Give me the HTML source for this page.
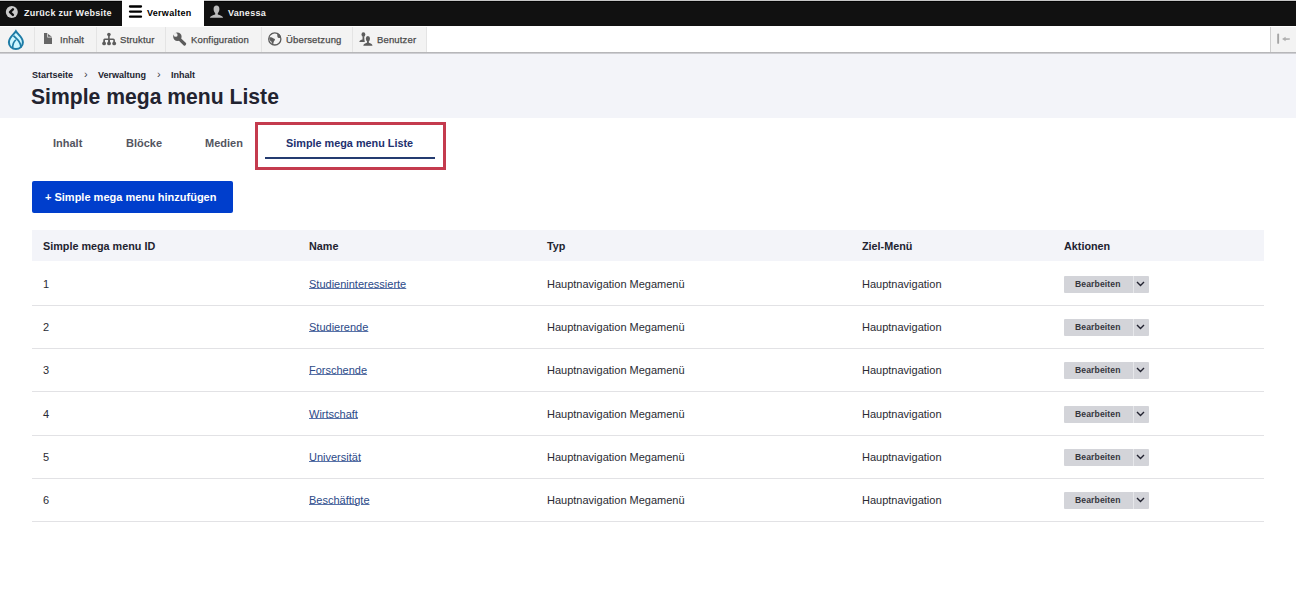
<!DOCTYPE html>
<html><head><meta charset="utf-8">
<style>
*{box-sizing:border-box;margin:0;padding:0}
html,body{width:1296px;height:592px;overflow:hidden;background:#fff;font-family:"Liberation Sans",sans-serif;color:#222330}
.abs{position:absolute;white-space:nowrap}
#topline{position:absolute;left:0;top:0;width:1296px;height:1px;background:#c6c6c6}
#bar{position:absolute;left:0;top:1px;width:1296px;height:25px;background:#111;border-top:1px solid #040404}
.bt{position:absolute;top:1px;height:25px;line-height:25px;font-size:9px;font-weight:700;letter-spacing:.28px;color:#f0f0f0}
#tray{position:absolute;left:0;top:26px;width:1296px;height:26px;background:#fff;border-top:1px solid #fff}
#trayshadow{position:absolute;left:0;top:52px;width:1296px;height:2px;background:linear-gradient(#ababad,#d8d9de)}
.ti{position:absolute;top:27px;height:25px;background:#f3f3f3;border-right:1px solid #e4e4e4}
.tt{position:absolute;top:27px;height:25px;line-height:25px;font-size:9.5px;color:#4a4a4a;letter-spacing:.15px;-webkit-text-stroke:.25px #4a4a4a}
#header{position:absolute;left:0;top:54px;width:1296px;height:64px;background:#f3f4f9}
.crumb{position:absolute;top:69px;font-size:9px;font-weight:700;color:#222330;line-height:12px}
#title{position:absolute;left:31px;top:84px;font-size:21.15px;font-weight:700;line-height:26px;color:#222330}
.tab{position:absolute;top:137px;font-size:11px;font-weight:700;color:#545560;line-height:13px}
#redbox{position:absolute;left:255px;top:122px;width:191px;height:48px;border:3px solid #c43b4e}
#uline{position:absolute;left:265px;top:157px;width:170px;height:2px;background:#243b70}
#btn{position:absolute;left:32px;top:181px;width:201px;height:32px;background:#003ecc;border-radius:2px;color:#fff;font-size:11px;font-weight:700;line-height:32px;padding-left:13px}
#thead{position:absolute;left:32px;top:230px;width:1232px;height:31px;background:#f3f4f9}
.th{position:absolute;top:240px;font-size:10.8px;font-weight:700;color:#222330;line-height:13px}
.td{position:absolute;font-size:11px;color:#2a2b33;line-height:13px}
.lnk{color:#2c4a88;text-decoration:underline;text-decoration-color:#5872a8;text-underline-offset:0px}
.sep{position:absolute;left:32px;width:1232px;height:1px;background:#e2e2e5}
.ab{position:absolute;left:1064px;width:85px;height:17px;background:#d3d4d9;border-radius:1px}
.ab .l{position:absolute;left:11px;top:0;line-height:17px;font-size:8.6px;font-weight:700;color:#35363d;letter-spacing:.12px}
.ab .s{position:absolute;left:69px;top:0;width:1px;height:17px;background:#e6e7ea}
.ab svg{position:absolute;left:72px;top:5px}
</style></head><body>
<div id="topline"></div>
<div id="bar"></div>
<!-- back icon -->
<svg class="abs" style="left:5px;top:5px" width="14" height="14" viewBox="0 0 14 14"><circle cx="6.8" cy="7" r="6" fill="#cbcbcb"/><path d="M7.9 4.3 L5 7.1 L7.9 9.9" stroke="#0f0f0f" stroke-width="2.4" fill="none" stroke-linecap="round" stroke-linejoin="round"/></svg>
<div class="bt" style="left:24px">Zurück zur Website</div>
<div class="abs" style="left:122px;top:0;width:82px;height:26px;background:#fff"></div>
<svg class="abs" style="left:128px;top:5px" width="15" height="14" viewBox="0 0 15 14"><path d="M2 1.5 H13 M2 6.6 H13 M2 11.7 H13" stroke="#000" stroke-width="2.3" stroke-linecap="round"/></svg>
<div class="bt" style="left:147px;color:#000">Verwalten</div>
<svg class="abs" style="left:209px;top:5px" width="15" height="14" viewBox="0 0 15 14"><path d="M7.5 0.5 C5.6 0.5 4.6 2 4.6 4 C4.6 6 5.5 7.6 6.2 8.2 L6.2 9.4 C4 10 1.5 10.8 0.8 12.8 L14.2 12.8 C13.5 10.8 11 10 8.8 9.4 L8.8 8.2 C9.5 7.6 10.4 6 10.4 4 C10.4 2 9.4 0.5 7.5 0.5Z" fill="#bcbcbc"/></svg>
<div class="bt" style="left:228px">Vanessa</div>

<div id="tray"></div>
<div class="ti" style="left:0;width:35px"></div>
<div class="ti" style="left:35px;width:62px"></div>
<div class="ti" style="left:97px;width:69px"></div>
<div class="ti" style="left:166px;width:96px"></div>
<div class="ti" style="left:262px;width:91px"></div>
<div class="ti" style="left:353px;width:74px"></div>
<div class="ti" style="left:1270px;width:26px;border-left:1px solid #cfcfcf;border-right:none"></div>
<div id="trayshadow"></div>
<!-- drupal logo -->
<svg class="abs" style="left:4px;top:27px" width="24" height="26" viewBox="0 0 24 26"><path d="M11.9 4.3 C13.4 7 18.9 10.2 18.9 15.2 C18.9 19.2 15.8 22 11.9 22 C8 22 4.9 19.2 4.9 15.2 C4.9 10.2 10.4 7 11.9 4.3Z" fill="#cdf6ff" stroke="#1e7ca6" stroke-width="2"/><path d="M9.6 8.8 C11.8 11.6 16.8 13.6 17 20.6" fill="none" stroke="#1e7ca6" stroke-width="1.8"/><path d="M11.9 12.9 C10 14.4 8.6 17 8.7 21" fill="none" stroke="#1e7ca6" stroke-width="1.7"/></svg>
<!-- doc icon -->
<svg class="abs" style="left:44px;top:33px" width="8" height="11" viewBox="0 0 8 11"><path d="M0 0 H3.3 V4.4 H8 V11 H0Z M4 1.1 L7.9 3.8 L4 3.8Z" fill="#666"/></svg>
<div class="tt" style="left:60px">Inhalt</div>
<!-- struktur -->
<svg class="abs" style="left:100px;top:30px" width="20" height="18" viewBox="0 0 20 18"><g fill="#5c5c5c"><circle cx="8.9" cy="4.6" r="1.8"/><rect x="8.1" y="5" width="1.6" height="4.4"/><path d="M4.6 8.4 H13.2 Q14.9 8.4 14.9 10.1 V13 H13.3 V10 H10 V13 H8.1 V10 H5 V13 H3.3 V10.1 Q3.3 8.4 4.6 8.4Z"/><circle cx="4.1" cy="13.4" r="1.9"/><circle cx="9" cy="13.4" r="1.9"/><circle cx="14.2" cy="13.4" r="1.9"/></g></svg>
<div class="tt" style="left:120px">Struktur</div>
<!-- wrench -->
<svg class="abs" style="left:170px;top:29px" width="20" height="19" viewBox="0 0 20 19"><g fill="#5c5c5c"><path d="M9 9.6 L14.6 15" stroke="#5c5c5c" stroke-width="3.2" stroke-linecap="round"/><circle cx="7.4" cy="7.8" r="4.2"/></g><circle cx="5.7" cy="5.9" r="1.9" fill="#f3f3f3"/><path d="M5.8 3.2 L3.2 5.8 L1 3.6 L3.6 1Z" fill="#f3f3f3"/></svg>
<div class="tt" style="left:191px">Konfiguration</div>
<!-- globe -->
<svg class="abs" style="left:265px;top:29px" width="20" height="19" viewBox="0 0 20 19"><circle cx="9.8" cy="9.9" r="6.1" fill="none" stroke="#5c5c5c" stroke-width="1.3"/><g fill="#5c5c5c"><path d="M12 3.8 C13.8 4.4 15.6 6 16.1 8.6 C15 9.4 13.6 9.2 12.6 8.2 C12 7 12.6 5.6 12 3.8Z"/><path d="M4.2 8.4 C6 8.2 7.4 8.8 8.6 9.4 C9.8 9.6 10.4 10.4 9.8 11.2 C8.8 12 8.2 13.2 8.4 15.8 C7.2 15.6 6.6 14 6.4 12.6 C5.4 12 4.4 11 4.2 8.4Z"/><path d="M5.2 5.6 C6.2 4.4 7.4 3.9 8.2 4 C7.4 5 6.4 5.8 5.2 5.6Z"/></g></svg>
<div class="tt" style="left:286px">Übersetzung</div>
<!-- users -->
<svg class="abs" style="left:356px;top:29px" width="20" height="19" viewBox="0 0 20 19"><g fill="#5c5c5c"><ellipse cx="7.4" cy="5.6" rx="1.9" ry="2.4"/><path d="M3.3 13 C3.5 11.4 5 10.8 6.5 10.4 L6.6 7.6 L8.2 7.6 L8.4 10.4 L8.8 13Z"/><ellipse cx="11.9" cy="9.7" rx="2.1" ry="2.6"/><path d="M7.3 16.8 C7.5 15 9.3 14.2 10.9 13.8 L11 11.6 L12.8 11.6 L12.9 13.8 C14.5 14.2 16.3 15 16.5 16.8Z"/></g></svg>
<div class="tt" style="left:377px">Benutzer</div>
<!-- toggle -->
<svg class="abs" style="left:1276px;top:33px" width="16" height="12" viewBox="0 0 16 12"><rect x="1.2" y="0.6" width="1.9" height="10.2" rx="0.9" fill="#a4a4a4"/><path d="M6 6 L9.6 3.8 L9.6 5.2 L13.8 5.3 L13.8 6.8 L9.6 6.9 L9.6 8.2Z" fill="#b0b0b0"/></svg>

<div id="header"></div>
<div class="crumb" style="left:32px">Startseite</div>
<div class="crumb" style="left:84px;top:68px;font-weight:400;font-size:11px;color:#3b3c45">›</div>
<div class="crumb" style="left:98px">Verwaltung</div>
<div class="crumb" style="left:157px;top:68px;font-weight:400;font-size:11px;color:#3b3c45">›</div>
<div class="crumb" style="left:171px">Inhalt</div>
<div id="title">Simple mega menu Liste</div>

<div class="tab" style="left:53px">Inhalt</div>
<div class="tab" style="left:126px">Blöcke</div>
<div class="tab" style="left:205px">Medien</div>
<div class="tab" style="left:286px;color:#22306e;font-size:10.85px">Simple mega menu Liste</div>
<div id="uline"></div>
<div id="redbox"></div>

<div id="btn">+ Simple mega menu hinzufügen</div>

<div id="thead"></div>
<div class="th" style="left:43px">Simple mega menu ID</div>
<div class="th" style="left:309px">Name</div>
<div class="th" style="left:547px">Typ</div>
<div class="th" style="left:862px">Ziel-Menü</div>
<div class="th" style="left:1064px">Aktionen</div>
<div class="td" style="left:43px;top:278px">1</div>
<div class="td lnk" style="left:309px;top:278px">Studieninteressierte</div>
<div class="td" style="left:547px;top:278px">Hauptnavigation Megamenü</div>
<div class="td" style="left:862px;top:278px">Hauptnavigation</div>
<div class="ab" style="top:276px"><span class="l">Bearbeiten</span><span class="s"></span><svg width="9" height="6" viewBox="0 0 9 6"><path d="M1 1 L4.5 4.5 L8 1" stroke="#222330" stroke-width="1.4" fill="none"/></svg></div>
<div class="sep" style="top:305px"></div>
<div class="td" style="left:43px;top:321px">2</div>
<div class="td lnk" style="left:309px;top:321px">Studierende</div>
<div class="td" style="left:547px;top:321px">Hauptnavigation Megamenü</div>
<div class="td" style="left:862px;top:321px">Hauptnavigation</div>
<div class="ab" style="top:319px"><span class="l">Bearbeiten</span><span class="s"></span><svg width="9" height="6" viewBox="0 0 9 6"><path d="M1 1 L4.5 4.5 L8 1" stroke="#222330" stroke-width="1.4" fill="none"/></svg></div>
<div class="sep" style="top:348px"></div>
<div class="td" style="left:43px;top:364px">3</div>
<div class="td lnk" style="left:309px;top:364px">Forschende</div>
<div class="td" style="left:547px;top:364px">Hauptnavigation Megamenü</div>
<div class="td" style="left:862px;top:364px">Hauptnavigation</div>
<div class="ab" style="top:362px"><span class="l">Bearbeiten</span><span class="s"></span><svg width="9" height="6" viewBox="0 0 9 6"><path d="M1 1 L4.5 4.5 L8 1" stroke="#222330" stroke-width="1.4" fill="none"/></svg></div>
<div class="sep" style="top:391px"></div>
<div class="td" style="left:43px;top:408px">4</div>
<div class="td lnk" style="left:309px;top:408px">Wirtschaft</div>
<div class="td" style="left:547px;top:408px">Hauptnavigation Megamenü</div>
<div class="td" style="left:862px;top:408px">Hauptnavigation</div>
<div class="ab" style="top:406px"><span class="l">Bearbeiten</span><span class="s"></span><svg width="9" height="6" viewBox="0 0 9 6"><path d="M1 1 L4.5 4.5 L8 1" stroke="#222330" stroke-width="1.4" fill="none"/></svg></div>
<div class="sep" style="top:435px"></div>
<div class="td" style="left:43px;top:451px">5</div>
<div class="td lnk" style="left:309px;top:451px">Universität</div>
<div class="td" style="left:547px;top:451px">Hauptnavigation Megamenü</div>
<div class="td" style="left:862px;top:451px">Hauptnavigation</div>
<div class="ab" style="top:449px"><span class="l">Bearbeiten</span><span class="s"></span><svg width="9" height="6" viewBox="0 0 9 6"><path d="M1 1 L4.5 4.5 L8 1" stroke="#222330" stroke-width="1.4" fill="none"/></svg></div>
<div class="sep" style="top:478px"></div>
<div class="td" style="left:43px;top:494px">6</div>
<div class="td lnk" style="left:309px;top:494px">Beschäftigte</div>
<div class="td" style="left:547px;top:494px">Hauptnavigation Megamenü</div>
<div class="td" style="left:862px;top:494px">Hauptnavigation</div>
<div class="ab" style="top:492px"><span class="l">Bearbeiten</span><span class="s"></span><svg width="9" height="6" viewBox="0 0 9 6"><path d="M1 1 L4.5 4.5 L8 1" stroke="#222330" stroke-width="1.4" fill="none"/></svg></div>
<div class="sep" style="top:521px"></div>
</body></html>
